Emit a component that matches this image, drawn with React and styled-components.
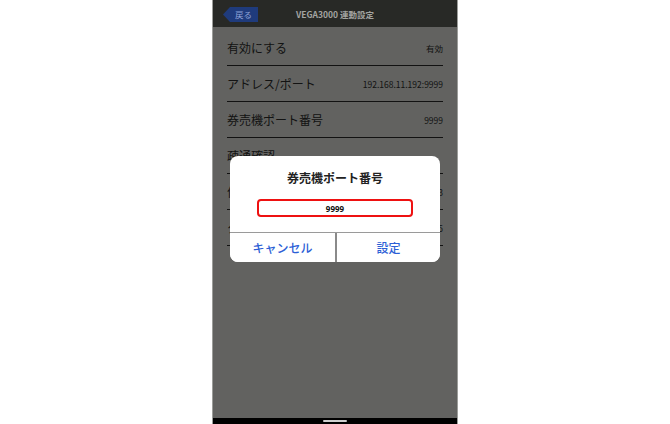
import React from "react";
import styled, { createGlobalStyle } from "styled-components";

const GlobalStyle = createGlobalStyle`
  html, body {
    margin: 0;
    padding: 0;
    background: #ffffff;
  }
  body {
    font-family: "Noto Sans CJK JP", "Noto Sans", sans-serif;
  }
`;

const settings = [
  { label: "有効にする", value: "有効" },
  { label: "アドレス/ポート", value: "192.168.11.192:9999" },
  { label: "券売機ポート番号", value: "9999" },
  { label: "疎通確認", value: "" },
  { label: "件数上限", value: "3" },
  { label: "タイムアウト", value: "5" },
];

function App() {
  return (
    <>
      <GlobalStyle />
      <Page>
        <Phone>
          <Header>
            <BackButton>戻る</BackButton>
            <Title>VEGA3000 連動設定</Title>
            <span />
          </Header>
          <Body>
            <List>
              {settings.map((item) => (
                <Row key={item.label}>
                  <Label>{item.label}</Label>
                  <Value>{item.value}</Value>
                </Row>
              ))}
            </List>
            <Backdrop>
              <Dialog>
                <DialogTitle>券売機ポート番号</DialogTitle>
                <Input defaultValue="9999" />
                <Actions>
                  <ActionButton>キャンセル</ActionButton>
                  <ActionButton divided>設定</ActionButton>
                </Actions>
              </Dialog>
            </Backdrop>
          </Body>
          <NavBar>
            <HomeBar />
          </NavBar>
        </Phone>
      </Page>
    </>
  );
}

const Page = styled.div`
  width: 670px;
  height: 424px;
  display: flex;
  justify-content: center;
  overflow: hidden;
`;

const Phone = styled.div`
  width: 244px;
  height: 424px;
  display: flex;
  flex-direction: column;
  border-left: 1px solid #9c9d9a;
  border-right: 1px solid #9c9d9a;
`;

const Header = styled.div`
  height: 27px;
  flex-shrink: 0;
  background: #282926;
  display: grid;
  grid-template-columns: 1fr auto 1fr;
  align-items: center;
  padding-left: 10px;
`;

const BackButton = styled.button`
  justify-self: start;
  width: 35px;
  height: 15px;
  margin-top: 2px;
  padding: 0 0 0 6px;
  border: none;
  background: #1f3b7c;
  color: #8fa2d6;
  font-family: inherit;
  font-size: 8.5px;
  line-height: 15px;
  clip-path: polygon(7px 0, 100% 0, 100% 100%, 7px 100%, 0 50%);
`;

const Title = styled.div`
  color: #a3a4a1;
  font-size: 8.5px;
  font-weight: 700;
  margin-left: -10px;
`;

const Body = styled.div`
  flex: 1;
  position: relative;
  background: #fbfdf6;
  overflow: hidden;
`;

const List = styled.div`
  padding: 3px 14px 0;
`;

const Row = styled.div`
  height: 35px;
  display: flex;
  align-items: center;
  justify-content: space-between;
  border-bottom: 1px solid #303030;
`;

const Label = styled.span`
  color: #333;
  font-size: 12px;
`;

const Value = styled.span`
  color: #333;
  font-size: 8.5px;
`;

const Backdrop = styled.div`
  position: absolute;
  inset: 0;
  background: rgba(0, 0, 0, 0.61);
  display: flex;
  flex-direction: column;
  align-items: center;
  padding-top: 129px;
`;

const Dialog = styled.div`
  width: 210px;
  background: #ffffff;
  border-radius: 8px;
  display: flex;
  flex-direction: column;
  align-items: center;
  overflow: hidden;
`;

const DialogTitle = styled.div`
  margin-top: 14px;
  line-height: 16px;
  font-size: 12px;
  font-weight: 700;
  color: #222;
`;

const Input = styled.input`
  box-sizing: border-box;
  width: 156px;
  height: 18px;
  margin: 13px 0 15px;
  border: 2px solid #ee1111;
  border-radius: 4px;
  outline: none;
  text-align: center;
  font-family: "Noto Sans", sans-serif;
  font-size: 8px;
  font-weight: 700;
  color: #111;
  padding: 0;
`;

const Actions = styled.div`
  align-self: stretch;
  display: grid;
  grid-template-columns: 1fr 1fr;
  border-top: 1px solid #9a9a9a;
`;

const ActionButton = styled.button`
  height: 29px;
  border: none;
  border-left: ${(p) => (p.divided ? "2px solid #8a8a8a" : "none")};
  background: #ffffff;
  color: #2d5fd6;
  font-family: inherit;
  font-size: 12px;
  font-weight: 500;
  padding: 0;
`;

const NavBar = styled.div`
  height: 6px;
  flex-shrink: 0;
  background: #000;
  display: flex;
  align-items: center;
  justify-content: center;
`;

const HomeBar = styled.div`
  width: 24px;
  height: 2px;
  border-radius: 1px;
  background: #cfcfcf;
`;

export default App;
